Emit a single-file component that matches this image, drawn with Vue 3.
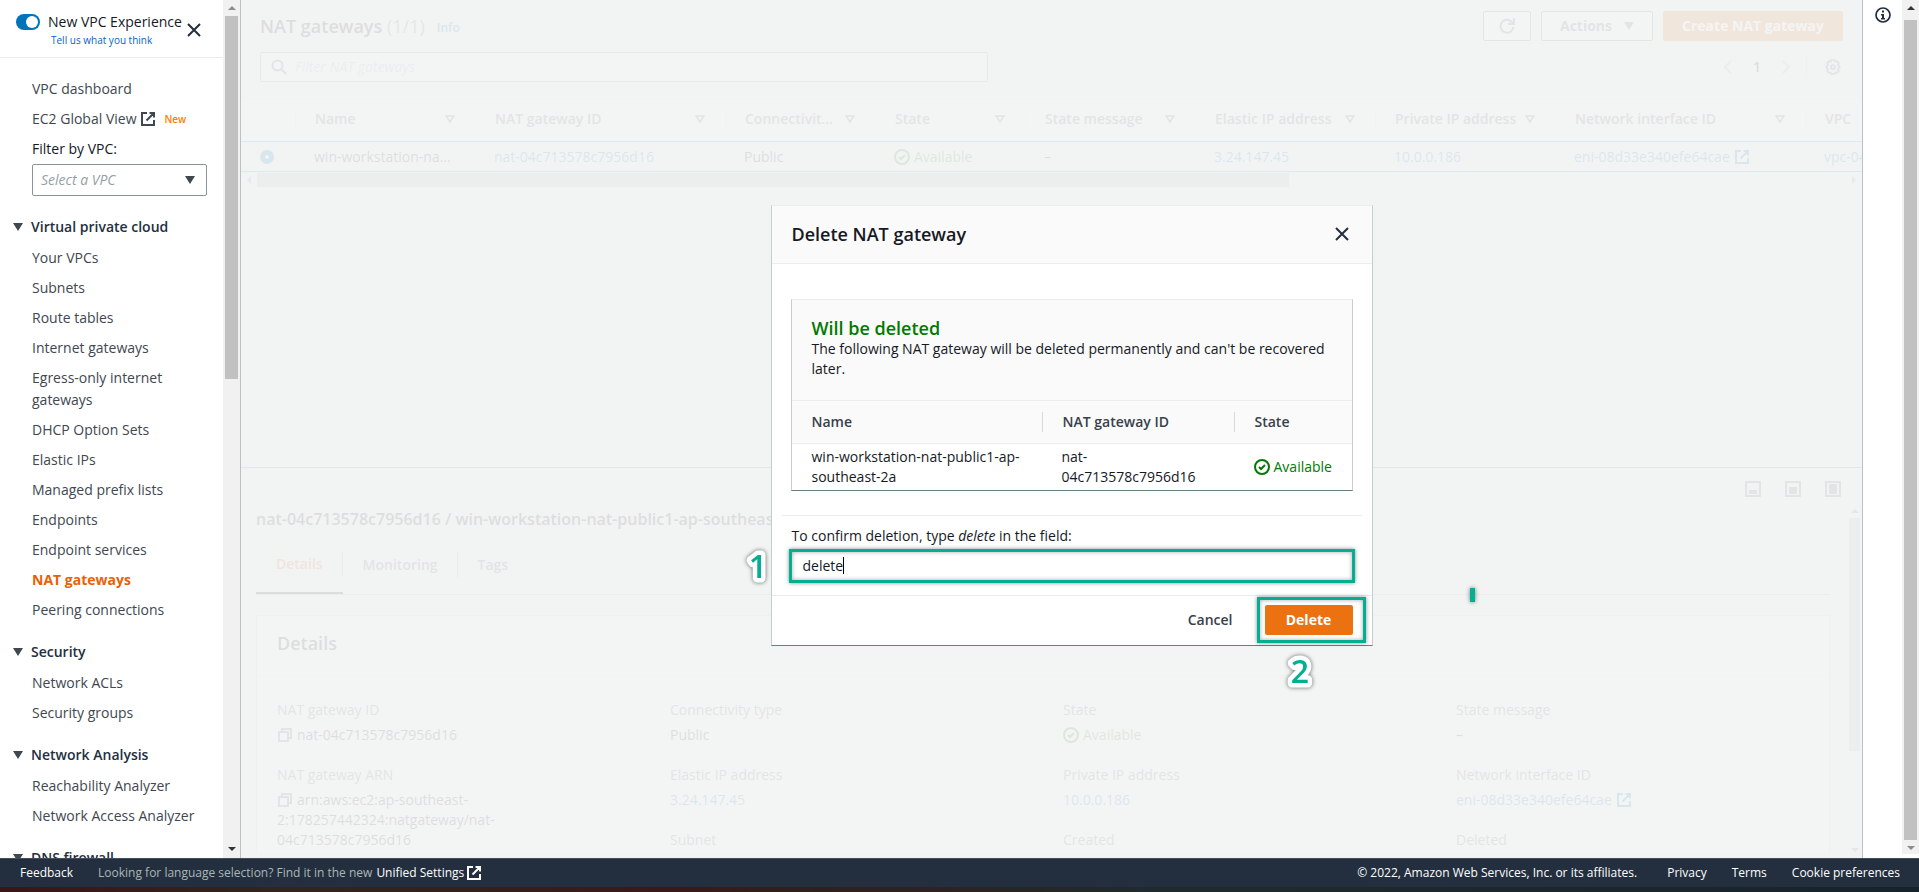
<script setup>
import { ref } from 'vue'

const navTop = ['VPC dashboard']
const navGroups = [
  {
    title: 'Virtual private cloud',
    items: [
      'Your VPCs', 'Subnets', 'Route tables', 'Internet gateways', 'Egress-only internet gateways',
      'DHCP Option Sets', 'Elastic IPs', 'Managed prefix lists', 'Endpoints', 'Endpoint services',
      'NAT gateways', 'Peering connections',
    ],
  },
  { title: 'Security', items: ['Network ACLs', 'Security groups'] },
  { title: 'Network Analysis', items: ['Reachability Analyzer', 'Network Access Analyzer'] },
  { title: 'DNS firewall', items: [] },
]
const activeItem = 'NAT gateways'

const columns = [
  { label: 'Name', cls: 'w180' },
  { label: 'NAT gateway ID', cls: 'w250' },
  { label: 'Connectivit…', cls: 'w150' },
  { label: 'State', cls: 'w150' },
  { label: 'State message', cls: 'w170' },
  { label: 'Elastic IP address', cls: 'w180' },
  { label: 'Private IP address', cls: 'w180' },
  { label: 'Network interface ID', cls: 'w250' },
]

const newExperience = ref(true)
const selected = ref('nat')
const filter = ref('')
const vpc = ref('')
const confirmText = ref('delete')
</script>

<template>
  <svg class="defs" aria-hidden="true">
    <symbol id="external" viewBox="0 0 16 16">
      <path d="M7 2H2v12h12V9M9.500 2H14v4.500M14 2 6.500 9.500" fill="none" stroke="currentColor" stroke-width="2" />
    </symbol>
    <symbol id="close" viewBox="0 0 16 16">
      <path d="m2 2 12 12M14 2 2 14" fill="none" stroke="currentColor" stroke-width="2" />
    </symbol>
    <symbol id="check" viewBox="0 0 16 16">
      <circle cx="8" cy="8" r="7" fill="none" stroke="currentColor" stroke-width="2" />
      <path d="m5 8 2 2 4-4" fill="none" stroke="currentColor" stroke-width="2" />
    </symbol>
    <symbol id="copy" viewBox="0 0 16 16">
      <path d="M2 5h9v9H2zM5 5V2h9v9h-3" fill="none" stroke="currentColor" stroke-width="2" />
    </symbol>
    <symbol id="down" viewBox="0 0 10 8"><path d="M0 0h10L5 8z" fill="currentColor" /></symbol>
    <symbol id="up" viewBox="0 0 8 4"><path d="M0 4h8L4 0z" fill="currentColor" /></symbol>
    <symbol id="dn" viewBox="0 0 8 4"><path d="M0 0h8L4 4z" fill="currentColor" /></symbol>
    <symbol id="sort" viewBox="0 0 10 8">
      <path d="M1 1h8L5 7z" fill="none" stroke="currentColor" stroke-width="1.500" />
    </symbol>
  </svg>

  <div class="page">
    <div class="body">
      <aside class="side">
        <div class="side-content">
          <header class="side-head">
            <input id="exp" v-model="newExperience" class="toggle" type="checkbox" />
            <div class="exp">
              <label for="exp">New VPC Experience</label>
              <a href="#">Tell us what you think</a>
            </div>
            <button class="icon-btn" aria-label="Close navigation"><svg class="ic"><use href="#close" /></svg></button>
          </header>
          <nav class="nav">
            <div class="items">
              <a v-for="t in navTop" :key="t" href="#">{{ t }}</a>
              <a href="#" class="ext">EC2 Global View <svg class="ic"><use href="#external" /></svg><small>New</small></a>
              <label for="vpc">Filter by VPC:</label>
            </div>
            <div class="select">
              <select id="vpc" v-model="vpc"><option value="">Select a VPC</option></select>
              <svg class="tri"><use href="#down" /></svg>
            </div>
            <section v-for="g in navGroups" :key="g.title">
              <h2><svg class="tri"><use href="#down" /></svg>{{ g.title }}</h2>
              <div class="items">
                <a v-for="t in g.items" :key="t" href="#" :class="{ active: t === activeItem }">{{ t }}</a>
              </div>
            </section>
          </nav>
        </div>
        <div class="vbar side-bar">
          <svg class="arrow muted"><use href="#up" /></svg>
          <div class="thumb"></div>
          <svg class="arrow"><use href="#dn" /></svg>
        </div>
      </aside>

      <div class="stage">
        <main class="main">
          <section class="list">
            <div class="row title-row">
              <h1>NAT gateways <span>(1/1)</span></h1>
              <a href="#" class="info">Info</a>
              <div class="actions">
                <button class="btn refresh" aria-label="Refresh">
                  <svg class="ic" viewBox="0 0 16 16"><path d="M14.500 9A6.500 6.500 0 1 1 12.500 3.500L14.500 5.500M15 0v6H9" fill="none" stroke="currentColor" stroke-width="2" /></svg>
                </button>
                <button class="btn act">Actions <svg class="tri"><use href="#down" /></svg></button>
                <button class="btn create">Create NAT gateway</button>
              </div>
            </div>
            <div class="row search-row">
              <div class="search">
                <svg class="ic" viewBox="0 0 16 16"><circle cx="6.500" cy="6.500" r="5" fill="none" stroke="currentColor" stroke-width="2" /><path d="m10 10 5 5" stroke="currentColor" stroke-width="2" /></svg>
                <input v-model="filter" type="text" aria-label="Filter NAT gateways" placeholder="Filter NAT gateways" />
              </div>
              <div class="pager">
                <button class="icon-btn dim" aria-label="Previous"><svg class="ic" viewBox="0 0 16 16"><path d="M11 2 5 8l6 6" fill="none" stroke="currentColor" stroke-width="2" /></svg></button>
                <span class="page-no">1</span>
                <button class="icon-btn dim" aria-label="Next"><svg class="ic" viewBox="0 0 16 16"><path d="m5 2 6 6-6 6" fill="none" stroke="currentColor" stroke-width="2" /></svg></button>
                <i class="sep"></i>
                <button class="icon-btn" aria-label="Preferences"><svg class="ic" viewBox="0 0 16 16"><path d="M6.500 1h3l.8 1.700 2-.4 1.500 2-.9 1.800 1.600 1.200v1.600l-1.600 1.200.9 1.800-1.500 2-2-.4-.8 1.500h-3l-.8-1.500-2 .4-1.500-2 .9-1.800L1.500 8.900V7.300l1.600-1.200-.9-1.800 1.500-2 2 .4z" fill="none" stroke="currentColor" stroke-width="1.700" /><circle cx="8" cy="8" r="2" fill="none" stroke="currentColor" stroke-width="1.700" /></svg></button>
              </div>
            </div>
            <div class="table-wrap">
              <table class="grid">
                <thead>
                  <tr>
                    <th class="w54"></th>
                    <th v-for="c in columns" :key="c.label" :class="c.cls">
                      <div class="th">{{ c.label }}<svg class="tri"><use href="#sort" /></svg></div>
                    </th>
                    <th class="wrest"><div class="th">VPC</div></th>
                  </tr>
                </thead>
                <tbody>
                  <tr>
                    <td><input v-model="selected" class="pick" type="radio" name="gw" value="nat" aria-label="Select gateway" /></td>
                    <td>win-workstation-na…</td>
                    <td><a href="#">nat-04c713578c7956d16</a></td>
                    <td>Public</td>
                    <td><span class="ok"><svg class="ic"><use href="#check" /></svg>Available</span></td>
                    <td>–</td>
                    <td><a href="#">3.24.147.45</a></td>
                    <td><a href="#">10.0.0.186</a></td>
                    <td><a href="#" class="ext">eni-08d33e340efe64cae <svg class="ic"><use href="#external" /></svg></a></td>
                    <td><a href="#">vpc-04c7</a></td>
                  </tr>
                </tbody>
              </table>
            </div>
            <div class="hbar">
              <svg class="arrow left"><use href="#up" /></svg>
              <div class="hthumb"></div>
              <svg class="arrow right"><use href="#up" /></svg>
            </div>
          </section>

          <section class="split">
            <div class="panel-icons">
              <button class="icon-btn" aria-label="Small panel"><svg class="ic" viewBox="0 0 16 16"><path d="M1 1h14v14H1z" fill="none" stroke="currentColor" stroke-width="2" /><path d="M4 9h8v4H4z" fill="currentColor" /></svg></button>
              <button class="icon-btn" aria-label="Half panel"><svg class="ic" viewBox="0 0 16 16"><path d="M1 1h14v14H1z" fill="none" stroke="currentColor" stroke-width="2" /><path d="M4 6h8v7H4z" fill="currentColor" /></svg></button>
              <button class="icon-btn" aria-label="Full panel"><svg class="ic" viewBox="0 0 16 16"><path d="M1 1h14v14H1z" fill="none" stroke="currentColor" stroke-width="2" /><path d="M4 3h8v10H4z" fill="currentColor" /></svg></button>
            </div>
            <div class="split-body">
              <div class="split-content">
                <h2>nat-04c713578c7956d16 / win-workstation-nat-public1-ap-southeast-2a</h2>
                <div class="tabs">
                  <button class="on">Details</button><button>Monitoring</button><button>Tags</button>
                </div>
                <div class="card">
                  <h3>Details</h3>
                  <div class="facts">
                    <dl>
                      <dt>NAT gateway ID</dt>
                      <dd><svg class="ic"><use href="#copy" /></svg>nat-04c713578c7956d16</dd>
                      <dt>NAT gateway ARN</dt>
                      <dd><svg class="ic"><use href="#copy" /></svg>arn:aws:ec2:ap-southeast-<br />2:178257442324:natgateway/nat-<br />04c713578c7956d16</dd>
                    </dl>
                    <dl>
                      <dt>Connectivity type</dt>
                      <dd>Public</dd>
                      <dt>Elastic IP address</dt>
                      <dd><a href="#">3.24.147.45</a></dd>
                      <dt>Subnet</dt>
                    </dl>
                    <dl>
                      <dt>State</dt>
                      <dd><span class="ok"><svg class="ic"><use href="#check" /></svg>Available</span></dd>
                      <dt>Private IP address</dt>
                      <dd><a href="#">10.0.0.186</a></dd>
                      <dt>Created</dt>
                    </dl>
                    <dl>
                      <dt>State message</dt>
                      <dd>–</dd>
                      <dt>Network interface ID</dt>
                      <dd><a href="#" class="ext">eni-08d33e340efe64cae <svg class="ic"><use href="#external" /></svg></a></dd>
                      <dt>Deleted</dt>
                    </dl>
                  </div>
                </div>
              </div>
              <div class="vbar inner-bar">
                <svg class="arrow"><use href="#up" /></svg>
                <div class="thumb"></div>
                <svg class="arrow"><use href="#dn" /></svg>
              </div>
            </div>
          </section>
        </main>
        <div class="rail">
          <button class="icon-btn" aria-label="Help">
            <svg class="ic" viewBox="0 0 16 16"><circle cx="8" cy="8" r="7" fill="none" stroke="currentColor" stroke-width="1.700" /><path d="M7 3.500h2v2H7zM6 7h3v4h1v1.500H6V11h1V8.500H6z" fill="currentColor" /></svg>
          </button>
        </div>

        <div class="overlay">
          <div class="modal" role="dialog" aria-labelledby="dlg">
            <header>
              <h2 id="dlg">Delete NAT gateway</h2>
              <button class="icon-btn" aria-label="Close dialog"><svg class="ic"><use href="#close" /></svg></button>
            </header>
            <div class="modal-body">
              <div class="box">
                <div class="box-head">
                  <h3>Will be deleted</h3>
                  <p>The following NAT gateway will be deleted permanently and can't be recovered later.</p>
                </div>
                <table>
                  <thead>
                    <tr><th class="c1"><div>Name</div></th><th class="c2"><div>NAT gateway ID</div></th><th><div>State</div></th></tr>
                  </thead>
                  <tbody>
                    <tr>
                      <td>win-workstation-nat-public1-ap-southeast-2a</td>
                      <td>nat-<br />04c713578c7956d16</td>
                      <td><span class="ok"><svg class="ic"><use href="#check" /></svg>Available</span></td>
                    </tr>
                  </tbody>
                </table>
              </div>
              <div class="confirm">
                <label for="confirm">To confirm deletion, type <em>delete</em> in the field:</label>
                <div class="field">
                  <input id="confirm" v-model="confirmText" type="text" />
                  <i class="caret"></i>
                  <svg class="mark one" viewBox="0 0 40 40"><text x="20" y="31" text-anchor="middle">1</text></svg>
                </div>
              </div>
            </div>
            <footer>
              <button class="cancel">Cancel</button>
              <div class="ring">
                <button class="delete">Delete</button>
                <svg class="mark two" viewBox="0 0 40 40"><text x="20" y="31" text-anchor="middle">2</text></svg>
                <i class="tick"></i>
              </div>
            </footer>
          </div>
        </div>
      </div>

      <div class="vbar page-bar">
        <svg class="arrow"><use href="#up" /></svg>
        <div class="thumb"></div>
        <svg class="arrow muted"><use href="#dn" /></svg>
      </div>
    </div>

    <footer class="foot">
      <a href="#">Feedback</a>
      <p>Looking for language selection? Find it in the new <a href="#" class="ext">Unified Settings<svg class="ic"><use href="#external" /></svg></a></p>
      <div class="legal">
        <span>© 2022, Amazon Web Services, Inc. or its affiliates.</span>
        <div class="links"><a href="#">Privacy</a><a href="#">Terms</a><a href="#">Cookie preferences</a></div>
      </div>
    </footer>
    <div class="strip"></div>
  </div>
</template>

<style>
body { margin: 0; overflow: hidden; }
</style>

<style scoped>
* { box-sizing: border-box; }
.defs { position: absolute; width: 0; height: 0; }
.page {
  height: 100vh; display: flex; flex-direction: column; overflow: hidden;
  font: 14px/20px "Open Sans", "Noto Sans", sans-serif; color: #16191f; background: #fff;
}
.body { flex: 1; min-height: 0; display: flex; }
h1, h2, h3, p, dl, dd, dt { margin: 0; }
a { color: #0073bb; text-decoration: none; }
button { font: inherit; cursor: pointer; }
.ic { width: 16px; height: 16px; flex: none; }
.tri { width: 10px; height: 8px; flex: none; }
.icon-btn { border: 0; background: none; padding: 0; width: 16px; height: 16px; color: #545b64; display: flex; }
.ok { display: inline-flex; align-items: center; gap: 4px; color: #1d8102; vertical-align: middle; }
.ext { display: inline-flex; align-items: center; gap: 4px; }

/* scroll bars */
.vbar { flex: none; background: #f1f1f1; display: flex; flex-direction: column; align-items: center; padding: 6px 0; color: #333; }
.arrow { width: 8px; height: 4px; flex: none; }
.muted { color: #8b8b8b; }
.thumb { background: #c1c1c1; width: 13px; }
.side-bar { width: 17px; padding-bottom: 7px; }
.side-bar .thumb { margin: 6px 0 auto; flex: 0 0 43%; }
.page-bar { width: 17px; border-bottom: 4px solid #fff; padding-bottom: 4px; }
.page-bar .thumb { flex: 1; margin: 10px 0 6px; }

/* navigation */
.side { flex: none; width: 241px; display: flex; border-right: 1px solid #b9c3c5; overflow: hidden; }
.side-content { flex: 1; min-width: 0; overflow: hidden; }
.side-head { height: 58px; border-bottom: 1px solid #eaeded; display: flex; padding: 14px 0 0 16px; }
.toggle {
  appearance: none; margin: 0; width: 24px; height: 16px; border-radius: 8px; background: #879596; flex: none;
  display: flex; padding: 2px;
}
.toggle:checked { background: #0073bb; justify-content: flex-end; }
.toggle::after { content: ""; width: 12px; height: 12px; border-radius: 50%; background: #fff; }
.exp { margin-left: 8px; width: 130px; white-space: nowrap; display: flex; flex-direction: column; }
.exp label { line-height: 16px; }
.exp a { font-size: 10px; line-height: 16px; padding: 2px 0 0 3px; color: #0a5fc4; }
.side-head .icon-btn { margin: 8px 0 0 8px; color: #232f3e; }
.nav { padding: 20px 16px 0 12px; line-height: 22px; }
.nav a { color: #414750; }
.items { display: flex; flex-direction: column; gap: 8px; padding-left: 20px; }
.nav small { color: #ff8000; font-size: 10px; font-weight: 600; margin-left: 4px; }
.nav a.active { color: #eb5f07; font-weight: 700; }
.select { display: flex; align-items: center; margin: 4px 0 0 20px; position: relative; }
.select select {
  appearance: none; width: 100%; height: 32px; border: 1px solid #879596; border-radius: 2px; background: #fff;
  font: italic 14px/20px "Open Sans", sans-serif; color: #95a1a4; padding: 0 8px;
}
.select .tri { position: absolute; right: 12px; color: #414750; }
.nav h2 { font-size: 14px; font-weight: 600; line-height: 22px; display: flex; align-items: center; gap: 8px; color: #232f3e; padding: 20px 0 9px 1px; }
.nav h2 .tri { color: #414750; }

/* main area */
.stage { flex: 1; min-width: 0; display: flex; position: relative; }
.main { flex: 1; min-width: 0; display: flex; flex-direction: column; background: #fafafa; }
.rail { flex: none; width: 40px; border-left: 1px solid #b9c3c5; padding: 7px 0 0 12px; position: relative; z-index: 3; background: #fff; }
.rail .icon-btn { color: #232f3e; }
.list { flex: none; height: 467px; overflow: hidden; background: #f2f3f3; }
.row { display: flex; align-items: center; padding: 0 19px; }
.title-row { padding-top: 11px; height: 41px; }
h1 { font-size: 18px; line-height: 22px; font-weight: 600; }
h1 span { font-weight: 400; color: #687078; }
.info { font-size: 12px; margin: 4px 0 0 12px; font-weight: 600; }
.actions { margin-left: auto; display: flex; gap: 10px; }
.btn { height: 30px; border: 1px solid #545b64; border-radius: 2px; background: #fff; color: #545b64; font-weight: 700; display: flex; align-items: center; justify-content: center; padding: 0 20px; }
.refresh { width: 48px; padding: 0; }
.act { width: 112px; gap: 12px; }
.create { width: 180px; background: #ec7211; border-color: #ec7211; color: #fff; padding: 0; }
.search-row { margin-top: 11px; justify-content: space-between; }
.search { width: 46%; height: 30px; display: flex; align-items: center; gap: 8px; padding: 0 10px; border: 1px solid #879596; border-radius: 2px; background: #fff; color: #545b64; }
.search input { border: 0; outline: 0; padding: 0; background: none; flex: 1; font: italic 14px/20px "Open Sans", sans-serif; }
.search input::placeholder { color: #aab7b8; }
.pager { display: flex; align-items: center; margin-right: 2px; }
.dim { color: #aab7b8; }
.page-no { width: 42px; text-align: center; font-weight: 600; }
.sep { width: 1px; height: 22px; background: #d5dbdb; margin: 0 18px 0 12px; }
.table-wrap { margin-top: 17px; overflow: hidden; border-top: 1px solid #eaeded; }
.grid { table-layout: fixed; width: 100%; border-collapse: separate; border-spacing: 0; white-space: nowrap; }
.grid th { text-align: left; padding: 0 0 3px; height: 41px; font-weight: 600; color: #545b64; background: #fafafa; }
.th { display: flex; align-items: center; justify-content: space-between; padding: 0 20px 0 19px; border-left: 1px solid #eaeded; }
.grid td { padding: 0 0 0 19px; height: 31px; vertical-align: middle; background: #f1faff; border: solid #00a1c9; border-width: 1px 0; }
.grid .ext { vertical-align: middle; }
.pick { appearance: none; display: block; margin: 0; width: 14px; height: 14px; border: 5px solid #0073bb; border-radius: 50%; background: #fff; }
.w54 { width: 54px; }
.w150 { width: 150px; }
.w170 { width: 170px; }
.w180 { width: 180px; }
.w250 { width: 250px; }
.grid .wrest .th { padding-right: 0; }
.hbar { display: flex; align-items: center; height: 16px; padding: 1px 4px; color: #879596; }
.hthumb { width: 64%; height: 14px; background: #b8baba; margin: 0 auto 0 4px; }
.left { transform: rotate(-90deg); }
.right { transform: rotate(90deg); }

.split { flex: 1; min-height: 0; border-top: 1px solid #687078; display: flex; flex-direction: column; background: #f2f3f3; }
.panel-icons { display: flex; justify-content: flex-end; gap: 24px; padding: 13px 21px 0 0; }
.split-body { flex: 1; min-height: 0; display: flex; margin-top: 12px; padding-bottom: 6px; }
.split-content { flex: 1; min-width: 0; height: 100%; overflow: hidden; padding: 0 17px 0 15px; }
.split h2 { font-size: 16px; line-height: 20px; font-weight: 600; }
.tabs { display: flex; border-bottom: 1px solid #aab7b8; margin-top: 10px; height: 56px; }
.tabs button { border: 0; background: none; color: #545b64; font-weight: 600; padding: 0 20px 4px; position: relative; display: flex; align-items: center; }
.tabs button:not(:last-child)::after { content: ""; position: absolute; right: 0; top: 12px; bottom: 16px; width: 1px; background: #aab7b8; }
.tabs .on { color: #eb5f07; border-bottom: 2px solid #16191f; }
.card { margin-top: 20px; border: 1px solid #d5dbdb; background: #fff; height: 400px; }
.card h3 { font-size: 18px; line-height: 24px; padding: 15px 20px 0; height: 60px; background: #fafafa; border-bottom: 1px solid #eaeded; font-weight: 600; }
.facts { display: grid; grid-template-columns: repeat(4, 1fr); padding-top: 24px; }
dl { padding-left: 20px; }
dt { color: #545b64; line-height: 20px; margin-bottom: 5px; }
dd { margin-bottom: 20px; line-height: 20px; }
dd > .ic { vertical-align: -3px; margin-right: 4px; color: #545b64; }
dd .ok, dd .ext { vertical-align: top; }
.inner-bar { width: 15px; background: none; color: #687078; padding: 0; }
.inner-bar .thumb { width: 11px; flex: 0 0 68%; background: #b8baba; margin: 5px 0 auto; }

/* dialog */
.overlay { position: absolute; inset: 0; z-index: 2; background: rgba(242, 243, 243, 0.9); display: flex; align-items: center; justify-content: center; padding-bottom: 8px; }
.modal { width: 602px; background: #fff; border: 1px solid #c6cdce; border-bottom-color: #687f80; border-top-color: #eaeded; }
.modal > header { height: 58px; background: #fafafa; border-bottom: 1px solid #eaeded; display: flex; align-items: center; justify-content: space-between; padding: 0 22px 0 20px; }
.modal header h2 { font-size: 18px; font-weight: 600; }
.modal .icon-btn { color: #232f3e; }
.modal-body { padding: 35px 10px 12px; }
.box { margin: 0 9px; border: 1px solid #c6cdce; border-top-color: #eaeded; border-bottom-color: #687f80; }
.box-head { background: #fafafa; padding: 17px 20px 21px; border-bottom: 1px solid #eaeded; }
.box-head h3 { font-size: 18px; line-height: 22px; font-weight: 600; color: #007a00; }
.box table { width: 100%; table-layout: fixed; border-collapse: separate; border-spacing: 0; }
.box th { text-align: left; font-weight: 600; color: #37414b; background: #fafafa; padding: 0; height: 43px; border-bottom: 1px solid #eaeded; }
.box th div { padding-left: 20px; }
.box th + th div { border-left: 1px solid #d5dbdb; }
.c1 { width: 250px; }
.c2 { width: 192px; }
.box td { padding: 3px 0 3px 20px; vertical-align: middle; }
.box .ok { color: #007a00; }
.confirm { margin-top: 24px; border-top: 1px solid #eaeded; padding: 10px 7px 0; }
.confirm label { display: block; padding: 0 0 3px 3px; }
.field { position: relative; display: flex; }
.field input { width: 100%; height: 34px; border: 3px solid #04ae90; outline: 0; padding: 0 11px; font: inherit; color: #16191f; box-shadow: 0 0 4px rgba(0, 0, 0, .45), inset 0 0 4px rgba(0, 0, 0, .35); }
.caret { position: absolute; left: 54px; top: 8px; width: 1px; height: 17px; background: #000; }
.mark { position: absolute; width: 40px; height: 40px; overflow: visible; filter: drop-shadow(0 0 2px rgba(0, 0, 0, .6)); }
.mark text { font: 600 32px/32px "Open Sans", sans-serif; fill: #04ae90; stroke: #fff; stroke-width: 9px; stroke-linejoin: round; paint-order: stroke; }
.one { left: -51px; top: -2px; }
.two { left: 20px; top: 52px; }
.modal > footer { border-top: 1px solid #eaeded; height: 50px; display: flex; justify-content: flex-end; align-items: center; padding-right: 6px; }
.cancel { border: 0; background: none; font-weight: 600; color: #37414b; padding: 0 24px; }
.ring { position: relative; height: 46px; width: 109px; border: 3px solid #04ae90; padding: 5px; box-shadow: 0 0 4px rgba(0, 0, 0, .45), inset 0 0 4px rgba(0, 0, 0, .35); }
.delete { display: block; width: 88px; height: 30px; background: #ec7211; color: #fff; border: 0; border-radius: 2px; font-weight: 700; padding: 0; }
.tick { position: absolute; left: 210px; top: -12px; width: 5px; height: 14px; background: #04ae90; box-shadow: 0 0 4px rgba(0, 0, 0, .5); }

/* page footer */
.foot { flex: none; height: 29px; background: #232f3e; border-top: 1px solid #414d5c; display: flex; align-items: center; padding: 0 19px 0 20px; font-size: 12px; line-height: 16px; color: #fff; }
.foot a, .legal span { color: #fff; font-weight: 500; }
.foot p { margin-left: 25px; color: #aab7b8; display: flex; gap: 4px; }
.foot .ext { gap: 2px; }
.legal { margin-left: auto; display: flex; gap: 30px; }
.links { display: flex; gap: 25px; }
.strip { flex: none; height: 5px; background: linear-gradient(90deg, #3d1513, #33251a 15%, #3a1a14 35%, #202a2e 60%, #17232b); }
</style>
